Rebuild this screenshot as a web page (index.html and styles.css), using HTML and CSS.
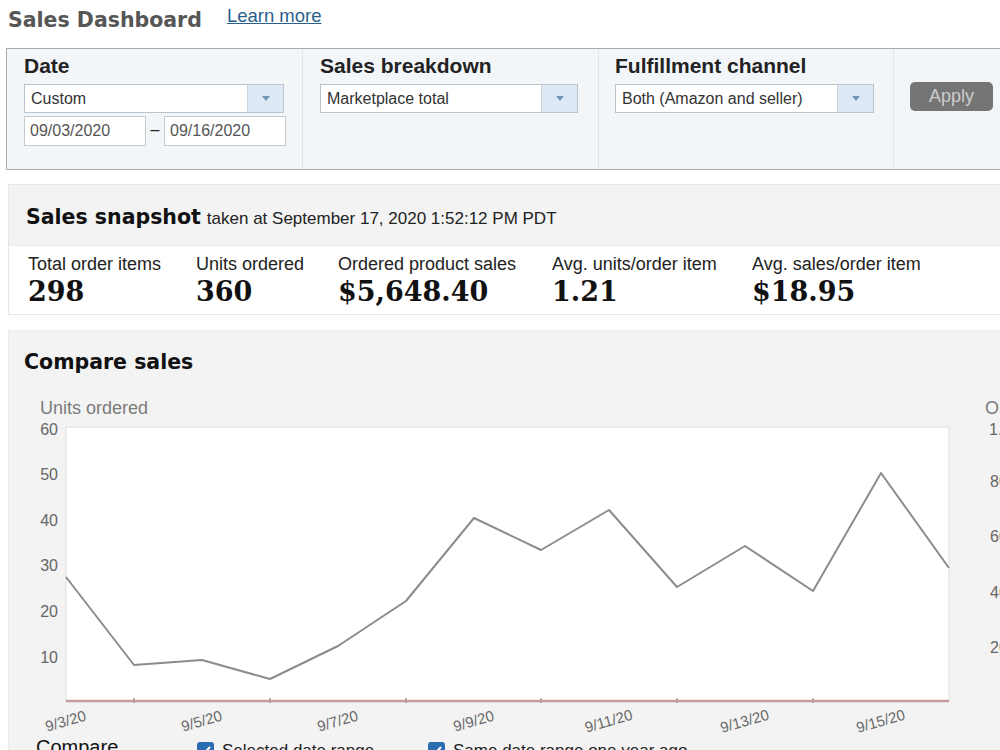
FILE: index.html
```html
<!DOCTYPE html>
<html lang="en">
<head>
<meta charset="utf-8">
<title>Sales Dashboard</title>
<link rel="stylesheet" href="styles.css">
</head>
<body>
<div class="page">
  <header class="top">
    <h1 class="title">Sales Dashboard</h1>
    <a class="learn" href="#">Learn more</a>
  </header>

  <section class="filters">
    <div class="fcol">
      <div class="flabel">Date</div>
      <div class="select w-date">
        <span class="select-text">Custom</span>
        <span class="select-btn"><i class="caret"></i></span>
      </div>
      <div class="range">
        <span class="input">09/03/2020</span>
        <span class="dash">–</span>
        <span class="input">09/16/2020</span>
      </div>
    </div>
    <div class="fcol">
      <div class="flabel">Sales breakdown</div>
      <div class="select w-break">
        <span class="select-text">Marketplace total</span>
        <span class="select-btn"><i class="caret"></i></span>
      </div>
    </div>
    <div class="fcol fcol-3">
      <div class="flabel">Fulfillment channel</div>
      <div class="select w-chan">
        <span class="select-text">Both (Amazon and seller)</span>
        <span class="select-btn"><i class="caret"></i></span>
      </div>
    </div>
    <div class="fcol fcol-last">
      <button class="apply" type="button">Apply</button>
    </div>
  </section>

  <section class="snapshot">
    <div class="snap-head">
      <h2 class="h2">Sales snapshot</h2>
      <span class="taken">taken at September 17, 2020 1:52:12 PM PDT</span>
    </div>
    <div class="metrics">
      <div class="metric"><div class="m-label">Total order items</div><div class="m-value">298</div></div>
      <div class="metric"><div class="m-label">Units ordered</div><div class="m-value">360</div></div>
      <div class="metric"><div class="m-label">Ordered product sales</div><div class="m-value">$5,648.40</div></div>
      <div class="metric"><div class="m-label">Avg. units/order item</div><div class="m-value">1.21</div></div>
      <div class="metric"><div class="m-label">Avg. sales/order item</div><div class="m-value">$18.95</div></div>
    </div>
  </section>

  <section class="compare">
    <h2 class="h2 compare-title">Compare sales</h2>
    <svg class="chart" width="991" height="346" viewBox="0 0 991 346">
      <text class="axis-title" x="31" y="24">Units ordered</text>
      <text class="axis-title" x="976" y="24">Ordered product sales</text>

      <g class="ytick" text-anchor="end">
        <text x="49" y="45">60</text>
        <text x="49" y="90">50</text>
        <text x="49" y="136">40</text>
        <text x="49" y="181">30</text>
        <text x="49" y="227">20</text>
        <text x="49" y="273">10</text>
      </g>
      <g class="ytick">
        <text x="980" y="45">1.000</text>
        <text x="981" y="97">800</text>
        <text x="981" y="152">600</text>
        <text x="981" y="208">400</text>
        <text x="981" y="263">200</text>
      </g>

      <rect class="plot" x="57" y="37" width="883" height="274"></rect>

      <!-- sales series sits on the baseline -->
      <line class="sales" x1="57" y1="311" x2="940" y2="311"></line>
      <g class="sales-ticks">
        <line x1="125" y1="308" x2="125" y2="313"></line>
        <line x1="261" y1="308" x2="261" y2="313"></line>
        <line x1="397" y1="308" x2="397" y2="313"></line>
        <line x1="532" y1="308" x2="532" y2="313"></line>
        <line x1="668" y1="308" x2="668" y2="313"></line>
        <line x1="804" y1="308" x2="804" y2="313"></line>
      </g>

      <polyline class="units" points="57,187 125,275 193,270 261,289 329,256 397,211 465,128 532,160 600,120 668,197 736,156 804,201 872,83 940,178"></polyline>

      <g class="xtick" text-anchor="middle">
        <text x="58" y="336" transform="rotate(-16 58 336)">9/3/20</text>
        <text x="194" y="336" transform="rotate(-16 194 336)">9/5/20</text>
        <text x="330" y="336" transform="rotate(-16 330 336)">9/7/20</text>
        <text x="466" y="336" transform="rotate(-16 466 336)">9/9/20</text>
        <text x="601" y="336" transform="rotate(-16 601 336)">9/11/20</text>
        <text x="737" y="336" transform="rotate(-16 737 336)">9/13/20</text>
        <text x="873" y="336" transform="rotate(-16 873 336)">9/15/20</text>
      </g>
    </svg>

    <div class="compare-row">
      <span class="compare-label">Compare</span>
      <label class="check check-1"><span class="box"><svg width="17" height="17" viewBox="0 0 17 17"><path d="M4 8.5l3 3 6-6.5" fill="none" stroke="#fff" stroke-width="2"/></svg></span>Selected date range</label>
      <label class="check"><span class="box"><svg width="17" height="17" viewBox="0 0 17 17"><path d="M4 8.5l3 3 6-6.5" fill="none" stroke="#fff" stroke-width="2"/></svg></span>Same date range one year ago</label>
    </div>
  </section>
</div>
</body>
</html>
```
FILE: styles.css
```css
html, body {
  margin: 0;
  padding: 0;
  background: #fff;
  overflow: hidden;
}

body {
  font-family: "Liberation Sans", Arial, sans-serif;
  color: #222;
}

.page {
  width: 1020px;
}

/* page heading */
.top {
  display: flex;
  align-items: flex-start;
  gap: 25px;
  height: 48px;
  padding: 7px 0 0 8px;
  box-sizing: border-box;
}

.title {
  margin: 0;
  font-family: "DejaVu Sans", Verdana, sans-serif;
  font-weight: bold;
  font-size: 20.5px;
  line-height: 26px;
  color: #565656;
}

.learn {
  font-size: 18.5px;
  line-height: 18px;
  color: #2b5f8c;
  text-decoration: underline;
}

/* filter bar */
.filters {
  display: flex;
  margin-left: 6px;
  width: 1010px;
  height: 122px;
  box-sizing: border-box;
  border: 1px solid #a4acb3;
  background: #f3f6f9;
}

.fcol {
  width: 296px;
  padding: 5px 0 0 17px;
  box-sizing: border-box;
  border-right: 1px solid #e1e5e9;
}

.fcol-3 {
  width: 295px;
  padding-left: 16px;
}

.fcol-last {
  flex: 1;
  border-right: none;
  padding-left: 16px;
}

.flabel {
  font-size: 21px;
  line-height: 24px;
  font-weight: bold;
  color: #222;
  margin-bottom: 6px;
}

.select {
  display: flex;
  height: 29px;
  box-sizing: border-box;
  border: 1px solid #bac4cc;
  background: #fff;
}

.w-date { width: 260px; }
.w-break { width: 258px; }
.w-chan { width: 259px; }

.select-text {
  flex: 1;
  padding-left: 6px;
  font-size: 16px;
  line-height: 27px;
  color: #333;
  white-space: nowrap;
}

.select-btn {
  width: 35px;
  display: flex;
  align-items: center;
  justify-content: center;
  border-left: 1px solid #c9d5df;
  background: #dde9f4;
}

.caret {
  width: 0;
  height: 0;
  border-left: 4px solid transparent;
  border-right: 4px solid transparent;
  border-top: 5px solid #7296b8;
}

.range {
  display: flex;
  margin-top: 3px;
}

.input {
  width: 122px;
  height: 30px;
  box-sizing: border-box;
  border: 1px solid #c3cad0;
  background: #fff;
  padding-left: 5px;
  font-size: 16px;
  line-height: 28px;
  color: #555;
}

.dash {
  width: 18px;
  text-align: center;
  font-size: 16px;
  line-height: 28px;
  color: #222;
}

.apply {
  margin-top: 28px;
  width: 83px;
  height: 29px;
  border: none;
  border-radius: 5px;
  background: #757575;
  color: #cdcdcd;
  font-family: "Liberation Sans", Arial, sans-serif;
  font-size: 18px;
  padding: 0;
}

/* snapshot */
.snapshot {
  margin: 14px 0 0 8px;
  width: 1010px;
  border: 1px solid #e7e7e7;
}

.snap-head {
  display: flex;
  align-items: baseline;
  height: 61px;
  box-sizing: border-box;
  padding: 19px 0 0 17px;
  background: #f3f3f3;
  border-bottom: 1px solid #e9e9e9;
}

.h2 {
  margin: 0;
  font-family: "DejaVu Sans", Verdana, sans-serif;
  font-weight: bold;
  font-size: 20.5px;
  line-height: 26px;
  color: #111;
}

.taken {
  margin-left: 6px;
  font-size: 17px;
  color: #222;
}

.metrics {
  display: grid;
  grid-template-columns: 168px 142px 214px 200px auto;
  height: 68px;
  box-sizing: border-box;
  padding: 8px 0 0 19px;
  background: #fff;
}

.m-label {
  font-size: 18px;
  line-height: 20px;
  color: #222;
  white-space: nowrap;
}

.m-value {
  margin-top: 3px;
  font-family: "DejaVu Serif", Georgia, serif;
  font-weight: bold;
  font-size: 27px;
  line-height: 30px;
  color: #111;
}

/* compare sales */
.compare {
  margin: 15px 0 0 8px;
  width: 1010px;
  height: 440px;
  border: 1px solid #ebebeb;
  background: #f3f3f3;
}

.compare-title {
  padding: 18px 0 0 15px;
  margin-bottom: 15px;
}

.chart {
  display: block;
  font-family: "Liberation Sans", Arial, sans-serif;
}

.axis-title {
  font-size: 18px;
  fill: #7b7b7b;
}

.ytick text {
  font-size: 16px;
  fill: #666;
}

.xtick text {
  font-size: 15px;
  fill: #6a6a6a;
}

.plot {
  fill: #fff;
  stroke: #dedede;
  stroke-width: 1;
}

.sales {
  stroke: #c49c9c;
  stroke-width: 2.5;
}

.sales-ticks line {
  stroke: #b09292;
  stroke-width: 1.5;
}

.units {
  fill: none;
  stroke: #8c8c8c;
  stroke-width: 2;
  stroke-linejoin: round;
}

.compare-row {
  display: flex;
  align-items: flex-start;
  padding-left: 27px;
  height: 30px;
}

.compare-label {
  width: 161px;
  font-size: 20px;
  line-height: 22px;
  color: #111;
}

.check {
  display: flex;
  align-items: flex-start;
  gap: 8px;
  margin-top: 6px;
  font-size: 17px;
  line-height: 18px;
  color: #222;
}

.check-1 {
  width: 231px;
}

.box {
  display: block;
  width: 17px;
  height: 17px;
  border-radius: 3px;
  background: #2b6cb0;
}

.box svg {
  display: block;
}
```
